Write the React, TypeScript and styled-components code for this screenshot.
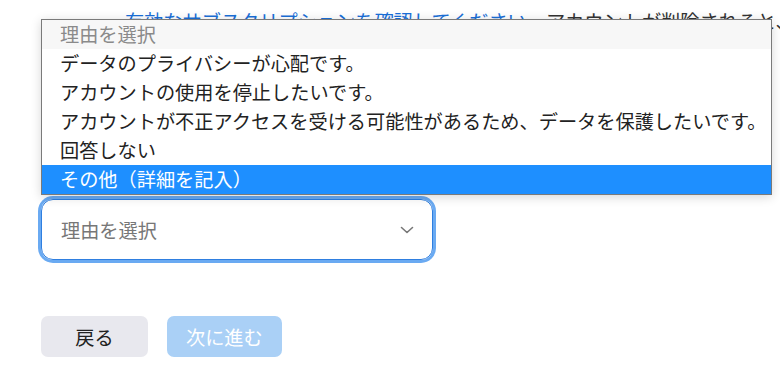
import React from "react";
import styled, { createGlobalStyle } from "styled-components";

const Global = createGlobalStyle`
  html, body { margin: 0; padding: 0; background: #ffffff; overflow: hidden; }
  body {
    width: 780px; height: 371px;
    font-family: "Noto Sans CJK JP", "Noto Sans", sans-serif;
    -webkit-font-smoothing: antialiased;
  }
  * { box-sizing: border-box; }
`;

const Page = styled.div`
  position: relative;
  width: 780px;
  height: 371px;
  padding: 7px 0 0 41px;
  display: flex;
  flex-direction: column;
  overflow: hidden;
`;

const Notice = styled.div`
  font-size: 19.2px;
  line-height: 29px;
  color: #333;
  padding-left: 84px;
  height: 183px;
  width: 739px;
  overflow: hidden;
`;

const NoticeLine = styled.div<{ $width: number }>`
  white-space: nowrap;
  width: ${(p) => p.$width}px;
  overflow: hidden;
`;

const Link = styled.span`
  color: #1a6fd8;
`;

const SelectBox = styled.div`
  width: 392px;
  height: 61px;
  margin-top: 9px;
  border: 1px solid #2f7fe0;
  border-radius: 12px;
  box-shadow: 0 0 0 3px #6aaaf2;
  display: flex;
  align-items: center;
  justify-content: space-between;
  padding: 0 18px 0 19px;
  font-size: 19.2px;
  color: #777;
`;

const Actions = styled.div`
  display: flex;
  gap: 19px;
  margin-top: 56px;
`;

const Button = styled.button<{ $primary?: boolean }>`
  height: 41px;
  min-width: 107px;
  padding: 0 19px;
  border: none;
  border-radius: 7px;
  font-family: inherit;
  font-size: 19.2px;
  background: ${(p) => (p.$primary ? "#aad0f6" : "#e8e8ee")};
  color: ${(p) => (p.$primary ? "#ffffff" : "#222")};
`;

const ListBox = styled.ul`
  position: absolute;
  top: 19px;
  left: 41px;
  width: 731px;
  margin: 0;
  padding: 0;
  list-style: none;
  background: #fff;
  border: 1px solid #7a7a7a;
  box-shadow: 0 2px 10px rgba(0, 0, 0, 0.16);
`;

const Option = styled.li<{ $disabled?: boolean; $selected?: boolean }>`
  height: 29px;
  line-height: 29px;
  padding-left: 18px;
  font-size: 19.2px;
  white-space: nowrap;
  color: ${(p) => (p.$selected ? "#fff" : p.$disabled ? "#8a8a8a" : "#222")};
  background: ${(p) => (p.$selected ? "#1e8fff" : p.$disabled ? "#f7f7f7" : "#fff")};
`;

const options = [
  { label: "理由を選択", disabled: true },
  { label: "データのプライバシーが心配です。" },
  { label: "アカウントの使用を停止したいです。" },
  { label: "アカウントが不正アクセスを受ける可能性があるため、データを保護したいです。" },
  { label: "回答しない" },
  { label: "その他（詳細を記入）", selected: true },
];

export default function App() {
  return (
    <>
      <Global />
      <Page>
        <Notice>
          <NoticeLine $width={660}>
            <Link>有効なサブスクリプションを確認してください</Link>。アカウントが削除されると、すべてのデータが失われます。
          </NoticeLine>
          <NoticeLine $width={600}>サブスクリプションは自動的にキャンセルされません。</NoticeLine>
          <NoticeLine $width={600}>削除の理由をお聞かせください。</NoticeLine>
        </Notice>
        <SelectBox>
          <span>理由を選択</span>
          <svg width="14" height="8" viewBox="0 0 14 8" fill="none">
            <path d="M1.5 1.5 L7 6.5 L12.5 1.5" stroke="#777" strokeWidth="1.6" strokeLinecap="round" strokeLinejoin="round" />
          </svg>
        </SelectBox>
        <Actions>
          <Button>戻る</Button>
          <Button $primary>次に進む</Button>
        </Actions>
        <ListBox>
          {options.map((o) => (
            <Option key={o.label} $disabled={o.disabled} $selected={o.selected}>
              {o.label}
            </Option>
          ))}
        </ListBox>
      </Page>
    </>
  );
}
